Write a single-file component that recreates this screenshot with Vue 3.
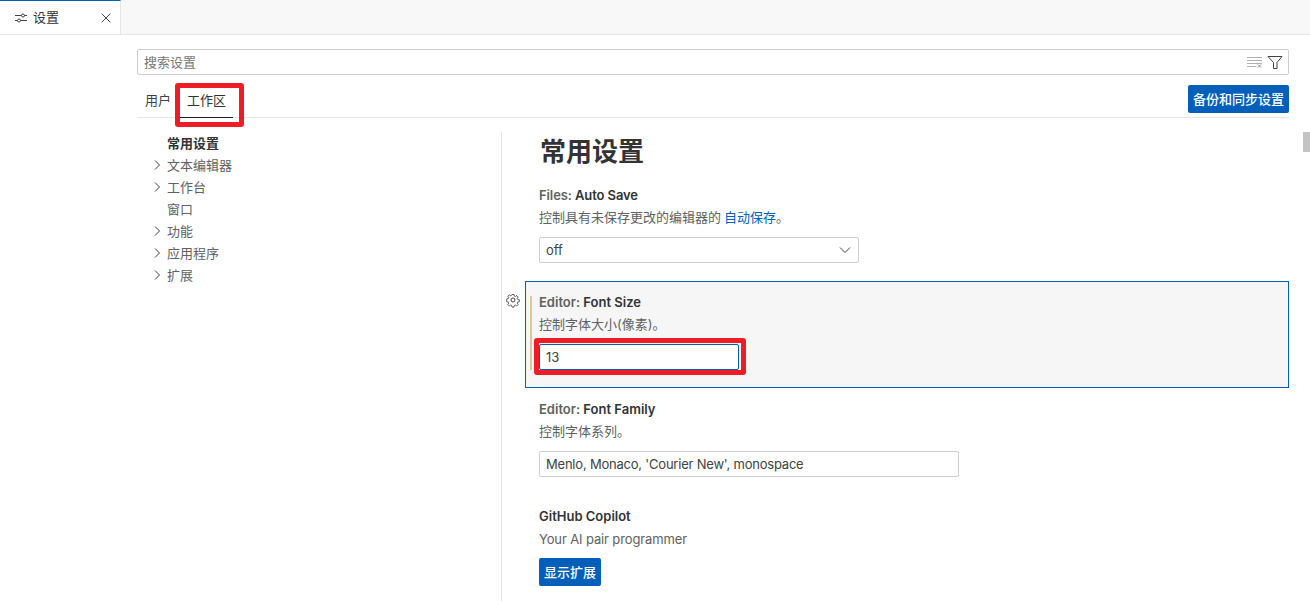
<template>
  <div class="window">
    <div class="tabbar">
      <div class="tab">
        <svg class="tab-icon" width="16" height="16" viewBox="0 0 16 16" fill="none" stroke="#424242" stroke-width="1">
          <path d="M2 5.500h6.500M11.500 5.500H14M2 10.500h2.500M7.500 10.500H14" />
          <circle cx="10" cy="5.500" r="1.500" />
          <circle cx="6" cy="10.500" r="1.500" />
        </svg>
        <span class="tab-title">设置</span>
        <svg class="tab-close" width="16" height="16" viewBox="0 0 16 16" fill="none" stroke="#424242" stroke-width="1">
          <path d="M3.700 3.700l8.600 8.600M12.300 3.700l-8.600 8.600" />
        </svg>
      </div>
    </div>

    <div class="settings">
      <div class="search">
        <span class="search-text">搜索设置</span>
        <div class="search-actions">
          <svg width="16" height="16" viewBox="0 0 16 16" fill="none" stroke="#b0b0b0" stroke-width="1">
            <path d="M0 3.500h15M0 6.500h15M0 9.500h15M0 12.500h9.500" />
            <path d="M11 10.500l3 3M14 10.500l-3 3" stroke="#8a8a8a" />
          </svg>
          <svg width="16" height="16" viewBox="0 0 16 16" fill="none" stroke="#424242" stroke-width="1">
            <path d="M1 2.500h14L10 8.500v6H6.500v-6z" />
          </svg>
        </div>
      </div>

      <div class="scope-row">
        <div class="scope-tabs">
          <span class="scope">用户</span>
          <span class="scope active">工作区</span>
        </div>
        <button class="btn sync"><span class="btn-text">备份和同步设置</span></button>
      </div>

      <div class="body">
        <nav class="toc">
          <div v-for="item in toc" :key="item.label" class="toc-item" :class="{ current: item.current }">
            <svg v-if="item.arrow" class="chev" width="16" height="16" viewBox="0 0 16 16" fill="none" stroke="#424242" stroke-width="1">
              <path d="M6 3.500l4.500 4.500L6 12.500" />
            </svg>
            <span v-else class="chev"></span>
            <span class="toc-label">{{ item.label }}</span>
          </div>
        </nav>

        <main class="content">
          <h2 class="group-title">常用设置</h2>

          <section class="setting first">
            <div class="setting-title tight"><span class="cat">Files: </span>Auto Save</div>
            <div class="desc">控制具有未保存更改的编辑器的<a class="link">自动保存</a>。</div>
            <div class="select">
              <span class="value">off</span>
              <svg width="16" height="16" viewBox="0 0 16 16" fill="none" stroke="#424242" stroke-width="1">
                <path d="M3 5.500l5 5 5-5" />
              </svg>
            </div>
          </section>

          <section class="setting focused">
            <svg class="gear" width="16" height="16" viewBox="0 0 16 16" fill="none" stroke="#424242" stroke-width="1">
              <path d="M6.800 1.500h2.400l.4 1.900 1.200.5 1.600-1.100 1.700 1.700-1.100 1.600.5 1.200 1.900.4v2.400l-1.900.4-.5 1.200 1.100 1.600-1.700 1.700-1.600-1.100-1.200.5-.4 1.900H6.800l-.4-1.900-1.200-.5-1.600 1.100-1.700-1.700 1.100-1.600-.5-1.200-1.900-.4V6.800l1.900-.4.5-1.200-1.100-1.600 1.700-1.700 1.600 1.100 1.200-.5z" transform="translate(1.200 1.200) scale(0.850)" />
              <circle cx="8" cy="8" r="2" />
            </svg>
            <div class="setting-title"><span class="cat">Editor: </span>Font Size</div>
            <div class="desc">控制字体大小(像素)。</div>
            <div class="input active-input"><span class="value">13</span></div>
            <div class="modified-bar"></div>
            <div class="mark mark-input"></div>
          </section>

          <section class="setting family">
            <div class="setting-title"><span class="cat">Editor: </span>Font Family</div>
            <div class="desc">控制字体系列。</div>
            <div class="input wide"><span class="value tight-more">Menlo, Monaco, 'Courier New', monospace</span></div>
          </section>

          <section class="setting copilot">
            <div class="setting-title">GitHub Copilot</div>
            <div class="desc latin">Your AI pair programmer</div>
            <button class="btn show-ext"><span class="btn-text">显示扩展</span></button>
          </section>
        </main>
      </div>

      <div class="mark mark-tab"></div>
    </div>

    <div class="scroll-thumb"></div>
  </div>
</template>

<script setup>
const toc = [
  { label: '常用设置', current: true },
  { label: '文本编辑器', arrow: true },
  { label: '工作台', arrow: true },
  { label: '窗口' },
  { label: '功能', arrow: true },
  { label: '应用程序', arrow: true },
  { label: '扩展', arrow: true }
]
</script>

<style>
html, body {
  margin: 0;
  background: #fff;
  overflow: hidden;
}
</style>

<style scoped>
.window {
  position: relative;
  width: 1310px;
  height: 601px;
  overflow: hidden;
  background: #fff;
  color: #616161;
  font-family: Inter, "Liberation Sans", "Noto Sans CJK SC", sans-serif;
  font-size: 13px;
}
.tabbar {
  height: 35px;
  box-sizing: border-box;
  background: #f8f8f8;
  border-bottom: 1px solid #e5e5e5;
}
.tab {
  width: 121px;
  height: 34px;
  box-sizing: border-box;
  display: flex;
  align-items: center;
  padding: 0 6px 0 13px;
  background: #fff;
  border-top: 1px solid #005fb8;
  border-right: 1px solid #e5e5e5;
  color: #333;
}
.tab-title {
  margin-left: 4px;
  margin-bottom: 3px;
  flex: 1;
}
.settings {
  position: relative;
  width: 1152px;
  margin-left: 137px;
  padding-top: 14px;
}
.search {
  height: 26px;
  box-sizing: border-box;
  border: 1px solid #cecece;
  border-radius: 2px;
  display: flex;
  align-items: center;
  justify-content: space-between;
  padding: 0 5px 0 6px;
  color: #767676;
}
.search-text {
  margin-bottom: 2px;
}
.search-actions {
  display: flex;
  gap: 4px;
}
.scope-row {
  height: 43px;
  box-sizing: border-box;
  border-bottom: 1px solid #e5e5e5;
  display: flex;
  justify-content: space-between;
  padding-top: 9px;
}
.scope-tabs {
  display: flex;
  gap: 9px;
  padding-left: 8px;
}
.scope {
  height: 34px;
  box-sizing: border-box;
  padding-top: 6px;
  color: #424242;
}
.scope.active {
  padding: 6px 7px 0;
  border-bottom: 1px solid #1f1f1f;
  color: #333;
}
.btn {
  border: 0;
  border-radius: 2px;
  background: #005fb8;
  color: #fff;
  font: inherit;
  font-weight: 500;
  padding: 0;
}
.btn-text {
  display: block;
  margin-top: -2px;
}
.sync {
  width: 101px;
  height: 28px;
  margin-top: 1px;
}
.body {
  display: flex;
  padding-top: 14px;
}
.toc {
  width: 365px;
  height: 469px;
  flex: none;
  box-sizing: border-box;
  border-right: 1px solid #e5e5e5;
  padding-left: 12px;
}
.toc-item {
  display: flex;
  align-items: center;
  height: 22px;
  color: #616161;
}
.toc-item.current {
  color: #333;
  font-weight: 700;
}
.toc-label {
  padding-bottom: 2px;
}
.chev {
  width: 16px;
  height: 16px;
  margin-right: 2px;
  flex: none;
}
.content {
  flex: 1;
  padding-left: 23px;
}
.group-title {
  margin: 0;
  height: 40px;
  font-size: 26px;
  line-height: 40px;
  font-weight: 600;
  color: #333;
  padding-left: 15px;
}
.setting {
  position: relative;
  box-sizing: border-box;
  padding: 0 14px;
}
.setting.first {
  margin-top: 13px;
  height: 96px;
}
.setting-title {
  height: 20px;
  line-height: 20px;
  font-weight: 600;
  color: #333;
}
.setting-title.tight {
  letter-spacing: -0.1px;
}
.cat {
  color: #616161;
}
.desc {
  margin-top: 2px;
  height: 20px;
  line-height: 20px;
}
.desc.latin {
  letter-spacing: -0.13px;
  line-height: 22px;
}
.link {
  margin-left: 3px;
  color: #005fb8;
}
.select, .input {
  box-sizing: border-box;
  height: 26px;
  margin-top: 10px;
  border: 1px solid #cecece;
  border-radius: 2px;
  width: 320px;
  display: flex;
  align-items: center;
  justify-content: space-between;
  padding: 0 5px 0 6px;
  color: #424242;
  background: #fff;
}
.tight-more {
  letter-spacing: -0.21px;
}
.input.wide {
  width: 420px;
}
.focused {
  height: 107px;
  padding: 10px 13px 0;
  background: #f6f6f6;
  border: 1px solid #005fb8;
}
.modified-bar {
  position: absolute;
  left: 4px;
  top: 14px;
  width: 2px;
  height: 74px;
  background: #dcc795;
}
.gear {
  position: absolute;
  left: -21px;
  top: 10px;
}
.active-input {
  width: 200px;
  border-color: #005fb8;
}
.mark {
  position: absolute;
  border: 5px solid #ee1c25;
  border-radius: 3px;
  box-sizing: border-box;
  pointer-events: none;
}
.mark-input {
  left: 8px;
  top: 56px;
  width: 212px;
  height: 37px;
}
.mark-tab {
  left: 38px;
  top: 48px;
  width: 69px;
  height: 44px;
}
.family {
  margin-top: 11px;
  height: 96px;
}
.copilot {
  padding-top: 11px;
}
.show-ext {
  display: block;
  width: 62px;
  height: 28px;
  margin-top: 10px;
}
.scroll-thumb {
  position: absolute;
  right: 0;
  top: 132px;
  width: 7px;
  height: 20px;
  background: #c4c4c4;
}
</style>
